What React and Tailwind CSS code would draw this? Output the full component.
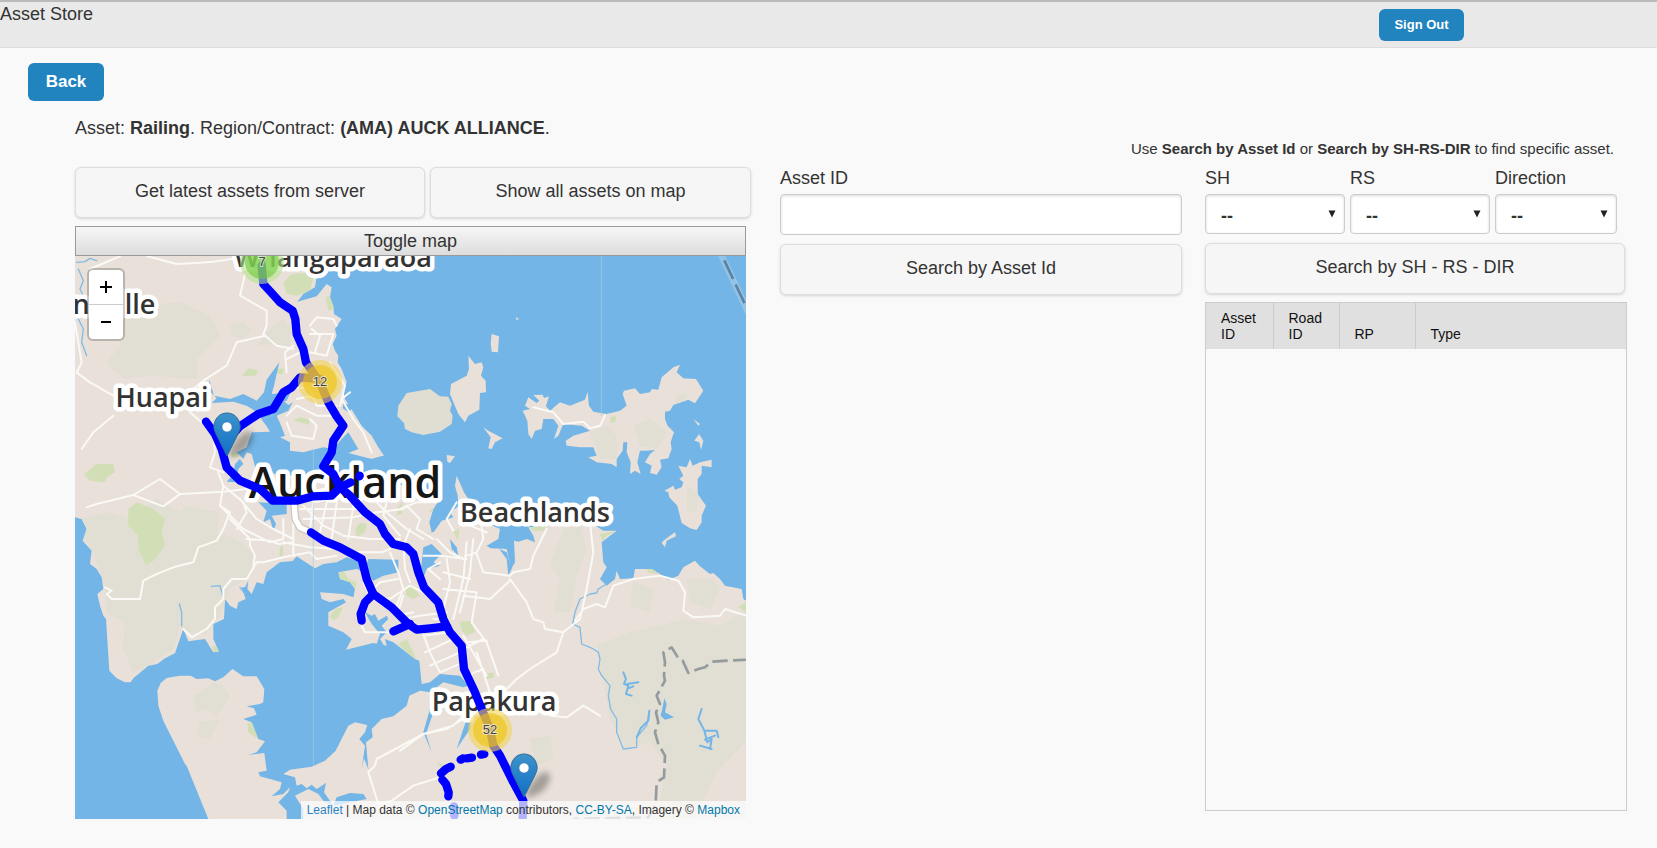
import { useState } from "react";
import clsx from "clsx";

// all the map shapes are digitised on a grid three times finer than the map itself
const MAINLAND =
  "15,111 740,111 742,160 735,205 700,225 682,248 740,232 770,195 785,205 780,235 790,260 792,285 815,300 795,330 800,350 788,375 795,395 805,410 803,430 815,450 830,490 820,515 825,540 850,580 875,620 905,650 925,685 942,710 905,720 870,715 850,760 1000,800 1110,840 1090,870 1078,910 1085,940 1050,950 1092,938 1115,905 1150,895 1140,880 1165,862 1163,830 1155,800 1160,770 1182,820 1235,905 1290,930 1285,960 1250,980 1262,988 1310,990 1320,1035 1318,1060 1335,1030 1332,965 1345,968 1370,960 1395,970 1390,950 1375,925 1560,910 1600,935 1640,935 1595,970 1600,1030 1610,1045 1590,1080 1610,1100 1635,1080 1640,1055 1650,1080 1690,1078 1695,1050 1745,1050 1770,1065 1795,1082 1825,1070 1840,1045 1875,1025 1890,1042 1920,1065 1930,1062 1950,1080 1965,1100 2015,1110 2020,1140 2035,1150 2035,1810 700,1810 700,1770 675,1730 715,1710 745,1725 760,1745 790,1760 890,1740 880,1725 840,1722 800,1735 790,1760 762,1720 768,1692 740,1710 725,1697 710,1708 695,1695 680,1700 675,1675 640,1665 660,1652 725,1643 765,1625 797,1595 835,1520 855,1510 892,1518 885,1540 868,1560 885,1580 875,1650 882,1618 895,1650 888,1570 908,1555 905,1530 935,1500 970,1492 1010,1460 1018,1430 1050,1415 1080,1420 1120,1390 1180,1405 1195,1400 1170,1370 1110,1365 1080,1390 1055,1395 1048,1325 1035,1320 970,1270 945,1260 950,1280 910,1272 828,1292 845,1260 820,1240 775,1220 775,1180 828,1150 820,1140 780,1150 755,1140 750,1120 820,1125 850,1135 855,1110 840,1090 810,1080 805,1060 860,1050 885,1060 910,1085 940,1070 985,1060 985,1022 895,1020 890,1035 830,1015 800,1030 760,1035 735,1048 700,1025 680,1012 668,1026 630,1030 590,1060 580,1095 560,1090 545,1125 532,1110 535,1085 525,1105 515,1105 527,1140 505,1150 500,1170 480,1160 465,1140 462,1200 430,1215 430,1260 447,1298 430,1300 405,1260 355,1267 340,1230 315,1303 285,1318 262,1335 235,1340 190,1378 182,1390 165,1390 140,1378 118,1355 108,1200 100,1190 90,1160 82,1125 100,1110 95,1075 80,1050 60,1035 65,995 38,965 50,930 35,900 15,895";

const AWHITU =
  "415,1800 350,1640 345,1635 280,1505 265,1460 262,1415 272,1392 290,1377 330,1370 362,1370 380,1380 415,1378 435,1387 460,1375 487,1350 520,1372 560,1372 583,1410 580,1450 570,1455 530,1462 552,1468 560,1487 520,1500 545,1510 565,1560 585,1567 560,1600 535,1608 583,1602 590,1655 565,1660 570,1672 600,1680 635,1690 630,1710 605,1732 640,1725 660,1705 655,1720 625,1750 650,1775 650,1810 415,1810";

// Hauraki Gulf islands
const ISLANDS = [
  "1195,410 1215,435 1235,430 1240,445 1233,470 1247,485 1248,520 1230,522 1228,572 1195,590 1185,610 1165,585 1140,525 1143,495 1190,470 1197,450",
  "1265,345 1287,352 1284,400 1265,398 1262,372",
  "1337,295 1347,299 1340,304",
  "1240,625 1255,635 1298,658 1275,670 1265,690 1255,688 1262,655",
  "1130,708 1155,712 1140,732 1132,728",
  "1365,560 1375,535 1400,552 1408,545 1390,528 1418,527 1422,537 1437,532 1428,562 1440,575 1470,550 1500,560 1530,548 1545,542 1553,518 1557,560 1570,578 1610,585 1650,575 1670,560 1658,525 1662,515 1695,508 1710,525 1740,520 1745,510 1765,512 1775,475 1810,445 1830,437 1820,460 1840,478 1878,480 1900,515 1875,553 1855,542 1810,558 1800,575 1785,578 1785,600 1793,620 1812,640 1802,670 1805,690 1795,718 1770,722 1775,745 1760,767 1740,762 1745,740 1725,730 1740,705 1755,693 1725,695 1710,695 1702,730 1712,765 1695,755 1680,765 1682,730 1670,700 1672,670 1660,670 1658,695 1640,720 1640,745 1625,735 1580,730 1555,715 1580,710 1570,685 1530,685 1490,680 1487,665 1510,650 1560,635 1535,620 1480,615 1465,650 1452,660 1465,620 1450,600 1420,600 1415,630 1395,635 1385,660 1375,645 1372,605 1358,575 1380,570",
  "1860,720 1868,740 1890,730 1925,722 1925,745 1895,740 1895,765 1883,780 1883,825 1908,860 1895,890 1895,910 1880,933 1860,928 1835,912 1822,860 1798,835 1795,820 1783,815 1810,800 1815,812 1835,805 1840,790 1828,780 1840,770 1825,740 1850,745",
  "1870,600 1890,615 1885,620",
  "1887,645 1900,665 1893,693 1888,670 1873,665",
  "1780,965 1815,940 1818,952 1790,965 1785,985 1775,972",
];

const RANGITOTO =
  "985,560 1010,522 1080,510 1110,532 1135,533 1145,555 1140,575 1148,590 1145,615 1110,638 1060,648 1025,640 1005,630 1002,612 982,592";

const HILLS = [
  "15,900 120,880 180,900 260,840 330,880 350,860 450,880 440,940 500,960 550,1000 540,1070 480,1110 450,1190 430,1215 405,1245 350,1240 330,1220 310,1290 250,1330 190,1360 160,1290 165,1210 110,1180 105,1100 70,1000 45,960",
  "150,300 230,260 330,250 420,290 450,350 380,420 380,480 250,470 160,480 110,430 150,380",
  "480,320 520,310 545,330 520,360 485,350",
  "560,380 600,330 640,300 665,330 660,380 610,375",
  "370,1430 400,1415 430,1390 455,1400 480,1430 460,1460 440,1490 410,1470 380,1480",
  "390,1510 450,1500 420,1560 380,1550",
  "1480,930 1530,920 1550,990 1520,1070 1500,1180 1450,1180 1470,1080 1440,1040",
  "1580,1280 1680,1240 1850,1200 1950,1220 2035,1170 2035,1560 1940,1660 1870,1800 1760,1800 1790,1640 1740,1570 1670,1590 1620,1500 1600,1380",
  "1690,1090 1750,1110 1740,1180 1680,1160",
  "1850,1080 1930,1080 1950,1110 1920,1170 1860,1150",
  "1560,640 1610,620 1640,650 1640,720 1590,720",
  "1690,620 1740,600 1790,640 1760,690 1710,680",
  "1820,530 1850,520 1850,545 1815,555",
  "1850,800 1885,820 1880,880 1850,880",
  "1380,1560 1440,1550 1450,1620 1400,1640",
];

const PARKS = [
  "640,190 665,165 735,160 720,215 680,230 650,225",
  "768,235 780,230 792,270 775,275",
  "42,765 80,735 130,735 135,760 110,775 105,790 60,785",
  "175,870 200,850 250,870 285,900 275,940 285,980 250,1025 228,1038 205,990 205,950 175,920",
  "515,470 535,448 565,455 555,470",
  "618,450 640,448 640,465 620,465",
  "670,605 690,595 720,603 715,618 700,612",
  "855,930 870,912 890,915 885,940 860,953",
  "985,860 998,850 995,885 980,888",
  "803,1065 820,1055 835,1080 860,1090 855,1108 835,1100 808,1080",
  "778,1192 800,1168 820,1165 805,1195 790,1203",
  "630,985 638,980 640,1008 628,1015",
  "532,1512 550,1510 565,1545 560,1558 535,1540",
  "425,1282 437,1280 447,1298 432,1300",
  "985,1275 1010,1260 1030,1300 1040,1325 1020,1310",
  "1008,1105 1025,1100 1050,1130 1030,1140 1008,1130",
  "1168,1208 1205,1205 1215,1240 1190,1250 1175,1235",
  "1245,1365 1270,1360 1272,1375 1250,1380",
  "1375,920 1430,920 1420,935 1390,935",
  "1590,945 1645,935 1610,950 1598,968",
  "1728,1045 1750,1018 1758,1050 1772,1065 1735,1062",
  "1620,595 1640,590 1635,610 1622,612",
  "1150,940 1168,928 1165,965",
  "1075,875 1100,865 1090,880",
  "2005,1165 2028,1148 2030,1180",
  "1100,1632 1118,1635 1115,1648",
  "485,700 510,700 505,715 485,715",
];

const INLETS = [
  "545,640 600,638 590,622 575,602 605,590 620,560 640,545 655,558 668,550 655,575 620,590 630,612 645,650 630,655 660,670 660,695 700,700 760,685 790,690 815,660 835,640 865,690 835,702 905,720 940,710 1000,765 900,790 560,760 545,705 530,700 520,720 500,700 530,685",
  "418,482 432,530 480,540 520,525 560,545 582,520 590,482 628,430 612,500 605,525 662,520 650,545 612,552 605,590 575,602 562,580 530,560 490,548 425,552 440,538 415,512",
  "565,850 590,875 580,910 600,900 610,935 618,915 605,890 650,885 650,855",
  "495,735 510,720 520,735 505,750 500,790 470,788 490,765",
  "820,552 832,556 845,547 850,565 835,580 818,568",
  "1060,985 1085,975 1100,990 1115,1005 1090,1030 1110,1040 1070,1050 1055,1090 1050,1070 1055,1030",
  "1140,960 1160,985 1165,1010 1145,990",
  "885,1180 905,1190 915,1185 925,1205 950,1190 955,1200 935,1220 950,1240 930,1260 945,1285 920,1275 930,1245 905,1215",
  "1288,990 1310,1000 1325,1050 1315,1070 1310,1020",
  "1190,1500 1205,1480 1200,1530 1160,1590",
  "1080,1470 1090,1480 1068,1545 1085,1600 1060,1540",
];

const STREAMS =
  "M20,130L45,128 60,118 80,125M25,150L40,185 30,210 45,240M20,290L40,330 35,370 50,410M425,1102L450,1100 458,1130M328,1155L335,1180 335,1220M510,1105L525,1125M1610,1095L1585,1110 1580,1122 1560,1125 1530,1140 1515,1180 1508,1215 1530,1225 1535,1275 1560,1285 1570,1290 1585,1300 1590,1320 1585,1350 1595,1370 1620,1400 1615,1430 1622,1470 1640,1500 1640,1540 1660,1590 1700,1585 1700,1555 1730,1520 1738,1475";

const LAKES =
  "M1660,1360L1668,1380 1662,1395 1675,1400 1668,1425 1685,1430M1672,1395L1705,1390M1675,1408L1690,1402M1890,1580L1925,1590M1895,1470L1885,1500 1903,1535 1912,1570 1925,1560 1920,1590M1903,1535L1940,1535 1945,1555M1905,1562L1935,1550M1700,1555L1712,1528 1735,1505 1738,1475";

const RESERVOIR = "1783,1438 1790,1455 1785,1480 1812,1495 1785,1502 1772,1490 1778,1465";

const ROADS =
  "M15,310L35,430 20,460 60,490 130,530M60,150L150,112M230,111L320,135 380,132 430,128 500,118M525,165L510,230 590,275 590,320 580,345 620,380 670,390M585,350L500,370 470,440 400,485 370,510M360,580L430,640 435,700 420,745 460,760M130,590L70,640 35,690M50,865L80,855 190,828 270,780 330,825 280,862 190,828M330,825L460,818 530,810M105,1105L125,1115 110,1125 125,1140 210,1140 220,1085 260,1065 310,1045 370,1030 385,985 440,965 460,930 480,880 450,860 460,800 445,760M340,1230L365,1255 410,1230 435,1200 435,1165 460,1140 460,1110 485,1080 530,1080 560,1030 580,1030 640,1015 720,1000 740,1020 800,1010";

const STREETS =
  "M650,420L690,400 710,430M650,460L645,400 670,380M720,320L740,295 790,300M720,345L790,345 770,410 720,400M735,400L750,350 725,330M650,500L720,510 740,560 800,560M650,590L680,560 740,590 800,590M650,610L665,650 730,660 740,620 720,600M680,540L730,530M840,520L815,540 850,600 880,640 905,700M790,300L800,320M780,430L825,500 810,560M450,860L520,930 600,970 640,960 640,900M460,800L520,850 530,880 500,930M510,840L560,900 610,930 670,960M480,900L540,960 540,980 555,1010 550,1040M670,860L670,970 670,1010M530,960L600,965 625,975 670,970M700,860L760,920 820,950 900,960 990,960M730,850L720,930M770,850L750,940M800,850L785,960M700,900L850,895 920,880 1000,870M850,860L835,960M690,870L880,870M640,970L720,985 800,990M860,1000L935,1000 960,990M910,840L950,880 1010,930 1060,960M950,850L940,890 990,950M990,870L1040,850 1100,850M1010,860L1050,900 1040,930 1090,960M1020,930L1000,980 1005,1050 1020,1090M960,1000L985,1060 1000,1110 980,1160M900,1130L960,1140 1020,1100 1060,1120M880,1090L900,1130 940,1160M985,1080L930,1090 900,1120M1000,1130L980,1190 1030,1180M870,1210L885,1240 970,1240M1000,1200L1050,1190 1130,1180M1050,1220L1080,1300 1110,1360M1060,1250L1140,1240M1065,1300L1150,1260M1080,1340L1170,1300M1110,1360L1180,1330M1180,1250L1250,1370M1180,1290L1240,1260M1090,1200L1130,1200 1150,1240M1130,1020L1140,1090 1120,1170M1190,970L1180,1080 1150,1200M1210,960L1200,1060 1170,1180M1120,1110L1220,1120 1205,1210 1250,1270 1285,1370M1120,1060L1200,1080M1060,1010L1110,1010 1190,1020M1110,1030L1075,1050 1110,1080M1150,935L1130,900 1160,850M1180,870L1230,890 1240,960 1220,1000 1190,1010M1200,920L1250,940M1100,960L1140,1000 1180,1020M1220,1005L1240,1060 1320,1070 1330,1060 1380,1050 1390,1010 1430,930M1320,1080L1370,1150 1390,1200 1420,1210 1425,1230 1480,1240 1530,1200 1550,1110 1570,1000 1560,910M1480,1240L1460,1300 1380,1350 1340,1380 1310,1410M1320,1085L1260,1140 1180,1130M1515,1205L1540,1170 1580,1155 1605,1165 1630,1100 1690,1080 1770,1070 1825,1085 1845,1120 1840,1175 1870,1195 1950,1190 1965,1170 2028,1190M990,1595L1060,1545 1150,1520 1180,1490M1180,1500L1130,1530 1060,1545 920,1620 915,1640 895,1660 925,1755M925,1755L965,1745 1030,1700 1110,1675 1140,1650M1440,1490L1490,1495 1540,1460 1590,1490M1390,565L1450,580 1480,615 1540,608 1560,628 1590,620 1605,590M1220,1300L1260,1420M1240,1350L1190,1370M1190,1270L1250,1265";

const ROUTES = [
  "M575,140L580,195 605,222 630,250 668,275 676,300 680,345 700,390 708,430 750,490 775,550 800,592 820,620 790,665 785,700 760,742 790,765 810,805 840,830 885,880 930,915 945,945 970,975 1010,985 1030,1005 1045,1060 1062,1105 1105,1150 1120,1200 1140,1240 1175,1280 1182,1350 1215,1420 1235,1470 1260,1530 1270,1580 1290,1610 1330,1690 1360,1745 1358,1800",
  "M750,480L690,475 665,505 640,520 610,570 565,585 510,622 485,650",
  "M408,608L435,645 455,690 470,745 510,785 570,810 608,845 680,845 730,832 785,830 810,805 842,790M868,772L869,770",
  "M723,940L760,965 810,985 875,1020 890,1080 910,1125 965,1165 1015,1215 1040,1232 1080,1228 1130,1222",
  "M910,1125L885,1150 872,1185 875,1205M970,1237L1020,1215",
  "M1233,1607L1243,1605M1172,1622L1180,1618M1190,1618L1206,1616M1113,1663L1128,1650 1142,1643M1117,1682L1128,1695 1136,1720 1135,1732M1152,1762L1153,1790",
];

const PLACES = [
  { name: "Whangaparaoa", x: 333, y: 268, size: 27 },
  { name: "nsville", x: 114, y: 315, size: 27 },
  { name: "Huapai", x: 162, y: 408, size: 27 },
  { name: "Beachlands", x: 535, y: 523, size: 27 },
  { name: "Papakura", x: 494, y: 712, size: 27 },
  { name: "Auckland", x: 345, y: 499, size: 43 },
];

const CLUSTERS = [
  { count: 7, x: 262, y: 263, outer: "fill-[#b5e28c]/60", inner: "fill-[#6ecc39]/60" },
  { count: 12, x: 320, y: 383, outer: "fill-[#f1d357]/60", inner: "fill-[#f0c20c]/60" },
  { count: 52, x: 490, y: 731, outer: "fill-[#f1d357]/60", inner: "fill-[#f0c20c]/60" },
];

const PINS = [
  { x: 227, y: 457 },
  { x: 524, y: 798 },
];

function Pin({ x, y }) {
  return (
    <g transform={`translate(${x} ${y})`}>
      <path d="M0 0C6 -14 14 -24 22 -25C29 -24 26 -12 17 -5C11 -1 5 1 0 0Z" fill="#000" opacity="0.3" filter="url(#soft)" />
      <path
        d="M0 0L-11 -22C-13 -26 -13.500 -29 -13 -31C-12 -38 -7 -43 0 -43C7 -43 12 -38 13 -31C13.500 -29 13 -26 11 -22Z"
        fill="url(#pin)"
        stroke="#2e6c97"
        strokeWidth="1"
      />
      <circle cy="-29" r="5" fill="#fff" stroke="#2a6ea5" strokeWidth="0.5" />
    </g>
  );
}

function AssetMap() {
  return (
    <svg
      viewBox="75 257 671 563"
      preserveAspectRatio="xMidYMid slice"
      className="block h-full w-full"
      role="img"
      aria-label="Map of Auckland"
    >
      <defs>
        <linearGradient id="pin" x1="0" y1="0" x2="0" y2="1">
          <stop offset="0" stopColor="#3d93cb" />
          <stop offset="1" stopColor="#126fc6" />
        </linearGradient>
        <filter id="soft" x="-50%" y="-50%" width="200%" height="200%">
          <feGaussianBlur stdDeviation="3" />
        </filter>
        <clipPath id="land">
          <polygon points={MAINLAND} />
          <polygon points={AWHITU} />
          {ISLANDS.map((p) => <polygon key={p} points={p} />)}
        </clipPath>
      </defs>

      <rect x="75" y="257" width="671" height="563" fill="#73b5e6" />

      <g transform="translate(70 220) scale(0.33333)" fill="none" strokeLinejoin="round" strokeLinecap="round">
        <g fill="#e8e0d9">
          <polygon points={MAINLAND} />
          <polygon points={AWHITU} />
          {ISLANDS.map((p) => <polygon key={p} points={p} />)}
          <polygon points={RANGITOTO} fill="#e0ddd3" />
        </g>
        <g clipPath="url(#land)">
          <g fill="#e1ded3">{HILLS.map((p) => <polygon key={p} points={p} />)}</g>
          <g fill="#d2deb5">{PARKS.map((p) => <polygon key={p} points={p} />)}</g>
        </g>
        <g fill="#73b5e6">
          {INLETS.map((p) => <polygon key={p} points={p} />)}
          <polygon points={RESERVOIR} />
        </g>
        <path d={STREAMS} stroke="#82bce5" strokeWidth="4" />
        <path d={LAKES} stroke="#73b5e6" strokeWidth="6" />
        <path d={ROADS} stroke="#fbf9f6" strokeWidth="6" />
        <path d={STREETS} stroke="#fbf9f6" strokeWidth="6" />
        <path d="M672,850L676,900 690,925 723,940" stroke="#cdc7bf" strokeWidth="24" />
        <path d="M672,850L676,900 690,925 723,940" stroke="#fff" strokeWidth="16" />
        <path d="M730,690V1640M1594,111V590" stroke="#a3cbe8" strokeWidth="2" />

        {/* region boundary */}
        <path d="M1950,100L2035,280" stroke="#93c3e6" strokeWidth="20" />
        <path d="M1963,124L2028,262" stroke="#5b83a3" strokeWidth="8" strokeDasharray="62 18" strokeLinecap="butt" />
        <path
          d="M2035,1322L1990,1324 1925,1328 1905,1345 1885,1350 1855,1362 1838,1325 1825,1318 1805,1285 1780,1300 1785,1330 1782,1370 1785,1385 1760,1430 1770,1455 1758,1480 1765,1510 1755,1540 1765,1575 1785,1610 1782,1675 1760,1690 1757,1755 1735,1795 1510,1800"
          stroke="#949b9f"
          strokeWidth="8"
          strokeDasharray="46 16"
          strokeLinecap="butt"
        />
      </g>

      <g
        className="stroke-white font-['Open_Sans','Noto_Sans',sans-serif] font-semibold"
        strokeWidth="9"
        strokeLinejoin="round"
        paintOrder="stroke"
        textAnchor="middle"
      >
        {PLACES.map((p) => (
          <text key={p.name} x={p.x} y={p.y} fontSize={p.size} fill={p.size > 40 ? "#161616" : "#333"}>
            {p.name}
          </text>
        ))}
      </g>

      <g
        transform="translate(70 220) scale(0.33333)"
        fill="none"
        stroke="#0000ff"
        strokeWidth="25"
        strokeLinejoin="round"
        strokeLinecap="round"
      >
        {ROUTES.map((d) => <path key={d} d={d} />)}
      </g>

      {PINS.map((p) => <Pin key={p.x} {...p} />)}

      {CLUSTERS.map((c) => (
        <g key={c.count}>
          <circle cx={c.x} cy={c.y} r="22" className={c.outer} />
          <circle cx={c.x} cy={c.y} r="17" className={c.inner} />
          <text
            x={c.x}
            y={c.y + 4}
            textAnchor="middle"
            fontSize="13"
            paintOrder="stroke"
            strokeWidth="2"
            className="fill-[#444444] stroke-white/60"
          >
            {c.count}
          </text>
        </g>
      ))}
    </svg>
  );
}

function PanelButton({ className, ...props }) {
  return (
    <button
      type="button"
      className={clsx(
        "h-[51px] rounded-md border border-[#dddddd] bg-[#f6f6f6] pb-[2px] text-center shadow-[0_1px_3px_rgba(0,0,0,0.15)]",
        className
      )}
      {...props}
    />
  );
}

function SelectField({ id, label, className }) {
  return (
    <div className={className}>
      <label htmlFor={id} className="mb-1 block leading-[23px]">{label}</label>
      <div className="relative">
        <select
          id={id}
          className="block h-10 w-full appearance-none rounded-sm border border-[#cccccc] bg-white px-[15px] pt-1 font-bold shadow-[inset_0_1px_3px_rgba(0,0,0,0.15)]"
        >
          <option>--</option>
        </select>
        <svg viewBox="0 0 8 8" className="pointer-events-none absolute top-4 right-[9px] h-2 w-2" fill="#222">
          <path d="M0.500 0.500H7.500L4 7.500Z" />
        </svg>
      </div>
    </div>
  );
}

export default function App() {
  const [mapOpen, setMapOpen] = useState(true);
  const [assetId, setAssetId] = useState("");

  return (
    <div className="min-h-screen bg-[#f9f9f9] font-['Liberation_Sans',Arial,sans-serif] text-[18px] text-[#333333]">
      <header className="mb-[15px] flex h-12 items-start justify-between border-t-2 border-b border-t-[#b9bcb9] border-b-[#dddddd] bg-[#e9e9e9] pr-[193px]">
        <span className="leading-6">Asset Store</span>
        <button type="button" className="mt-[7px] h-8 w-[85px] rounded-md bg-[#2284bf] text-[13px] font-bold text-white">
          Sign Out
        </button>
      </header>

      <button type="button" className="ml-7 block h-[38px] w-[76px] rounded-md bg-[#2284bf] text-[17px] font-bold text-white">
        Back
      </button>

      <main className="mt-4 pr-[30px] pl-[75px]">
        <p className="leading-[22px]">
          Asset: <b>Railing</b>. Region/Contract: <b>(AMA) AUCK ALLIANCE</b>.
        </p>
        <p className="mb-2 pr-[13px] text-right text-[15px] leading-5">
          Use <b>Search by Asset Id</b> or <b>Search by SH-RS-DIR</b> to find specific asset.
        </p>

        <div className="grid grid-cols-[705fr_425fr_422fr] items-start">
          <section className="pr-[29px]">
            <div className="flex gap-[5px]">
              <PanelButton className="flex-[350]">Get latest assets from server</PanelButton>
              <PanelButton className="flex-[321]">Show all assets on map</PanelButton>
            </div>
            <div className="mt-2 mr-[5px]">
              <button
                type="button"
                onClick={() => setMapOpen(!mapOpen)}
                className="block h-[30px] w-full border border-[#999999] bg-linear-to-b from-[#f6f6f6] to-[#dddddd]"
              >
                Toggle map
              </button>
              {mapOpen && (
                <div className="relative h-[563px] overflow-hidden">
                  <AssetMap />
                  <div className="absolute top-3 left-3 flex w-[38px] flex-col rounded-md border-2 border-black/20 bg-white bg-clip-padding text-black">
                    <button type="button" aria-label="Zoom in" className="flex h-[35px] items-center justify-center border-b border-[#cccccc]">
                      <svg viewBox="0 0 14 14" className="h-[14px] w-[14px]" stroke="currentColor" strokeWidth="2">
                        <path d="M7 1V13M1 7H13" />
                      </svg>
                    </button>
                    <button type="button" aria-label="Zoom out" className="flex h-[34px] items-center justify-center">
                      <svg viewBox="0 0 14 14" className="h-[14px] w-[14px]" stroke="currentColor" strokeWidth="2">
                        <path d="M2 7H12" />
                      </svg>
                    </button>
                  </div>
                  <div className="absolute right-0 bottom-0 bg-white/70 px-[6px] text-[12px] leading-[18px]">
                    <a href="#leaflet" className="text-[#2a82c4]">Leaflet</a> | Map data ©{" "}
                    <a href="#osm" className="text-[#0078a8]">OpenStreetMap</a> contributors,{" "}
                    <a href="#licence" className="text-[#0078a8]">CC-BY-SA</a>, Imagery ©{" "}
                    <a href="#mapbox" className="text-[#0078a8]">Mapbox</a>
                  </div>
                </div>
              )}
            </div>
          </section>

          <section className="pr-[23px]">
            <label htmlFor="asset-id" className="mb-1 block leading-[23px]">Asset ID</label>
            <input
              id="asset-id"
              type="text"
              value={assetId}
              onChange={(e) => setAssetId(e.target.value)}
              className="mb-[9px] block h-[41px] w-full rounded-sm border border-[#cccccc] bg-white px-3 shadow-[inset_0_1px_3px_rgba(0,0,0,0.15)]"
            />
            <PanelButton className="w-full">Search by Asset Id</PanelButton>
          </section>

          <section>
            <div className="mb-[9px] flex gap-[5px] pr-[10px]">
              <SelectField id="sh" label="SH" className="flex-[140]" />
              <SelectField id="rs" label="RS" className="flex-[140]" />
              <SelectField id="direction" label="Direction" className="flex-[122]" />
            </div>
            <div className="mb-2 pr-[2px]">
              <PanelButton className="w-full">Search by SH - RS - DIR</PanelButton>
            </div>
            <div className="h-[509px] border border-[#cccccc]">
              <table className="w-full table-fixed border-collapse text-left text-[14px] leading-4 text-[#111111]">
                <thead className="bg-[#e0e0e0]">
                  <tr className="h-[46px] align-bottom">
                    <th className="w-[67px] border-r border-[#cccccc] pb-[7px] pl-[15px] font-normal">Asset<br />ID</th>
                    <th className="w-[66px] border-r border-[#cccccc] pb-[7px] pl-[15px] font-normal">Road<br />ID</th>
                    <th className="w-[76px] border-r border-[#cccccc] pb-[7px] pl-[15px] font-normal">RP</th>
                    <th className="pb-[7px] pl-[15px] font-normal">Type</th>
                  </tr>
                </thead>
              </table>
            </div>
          </section>
        </div>
      </main>
    </div>
  );
}
